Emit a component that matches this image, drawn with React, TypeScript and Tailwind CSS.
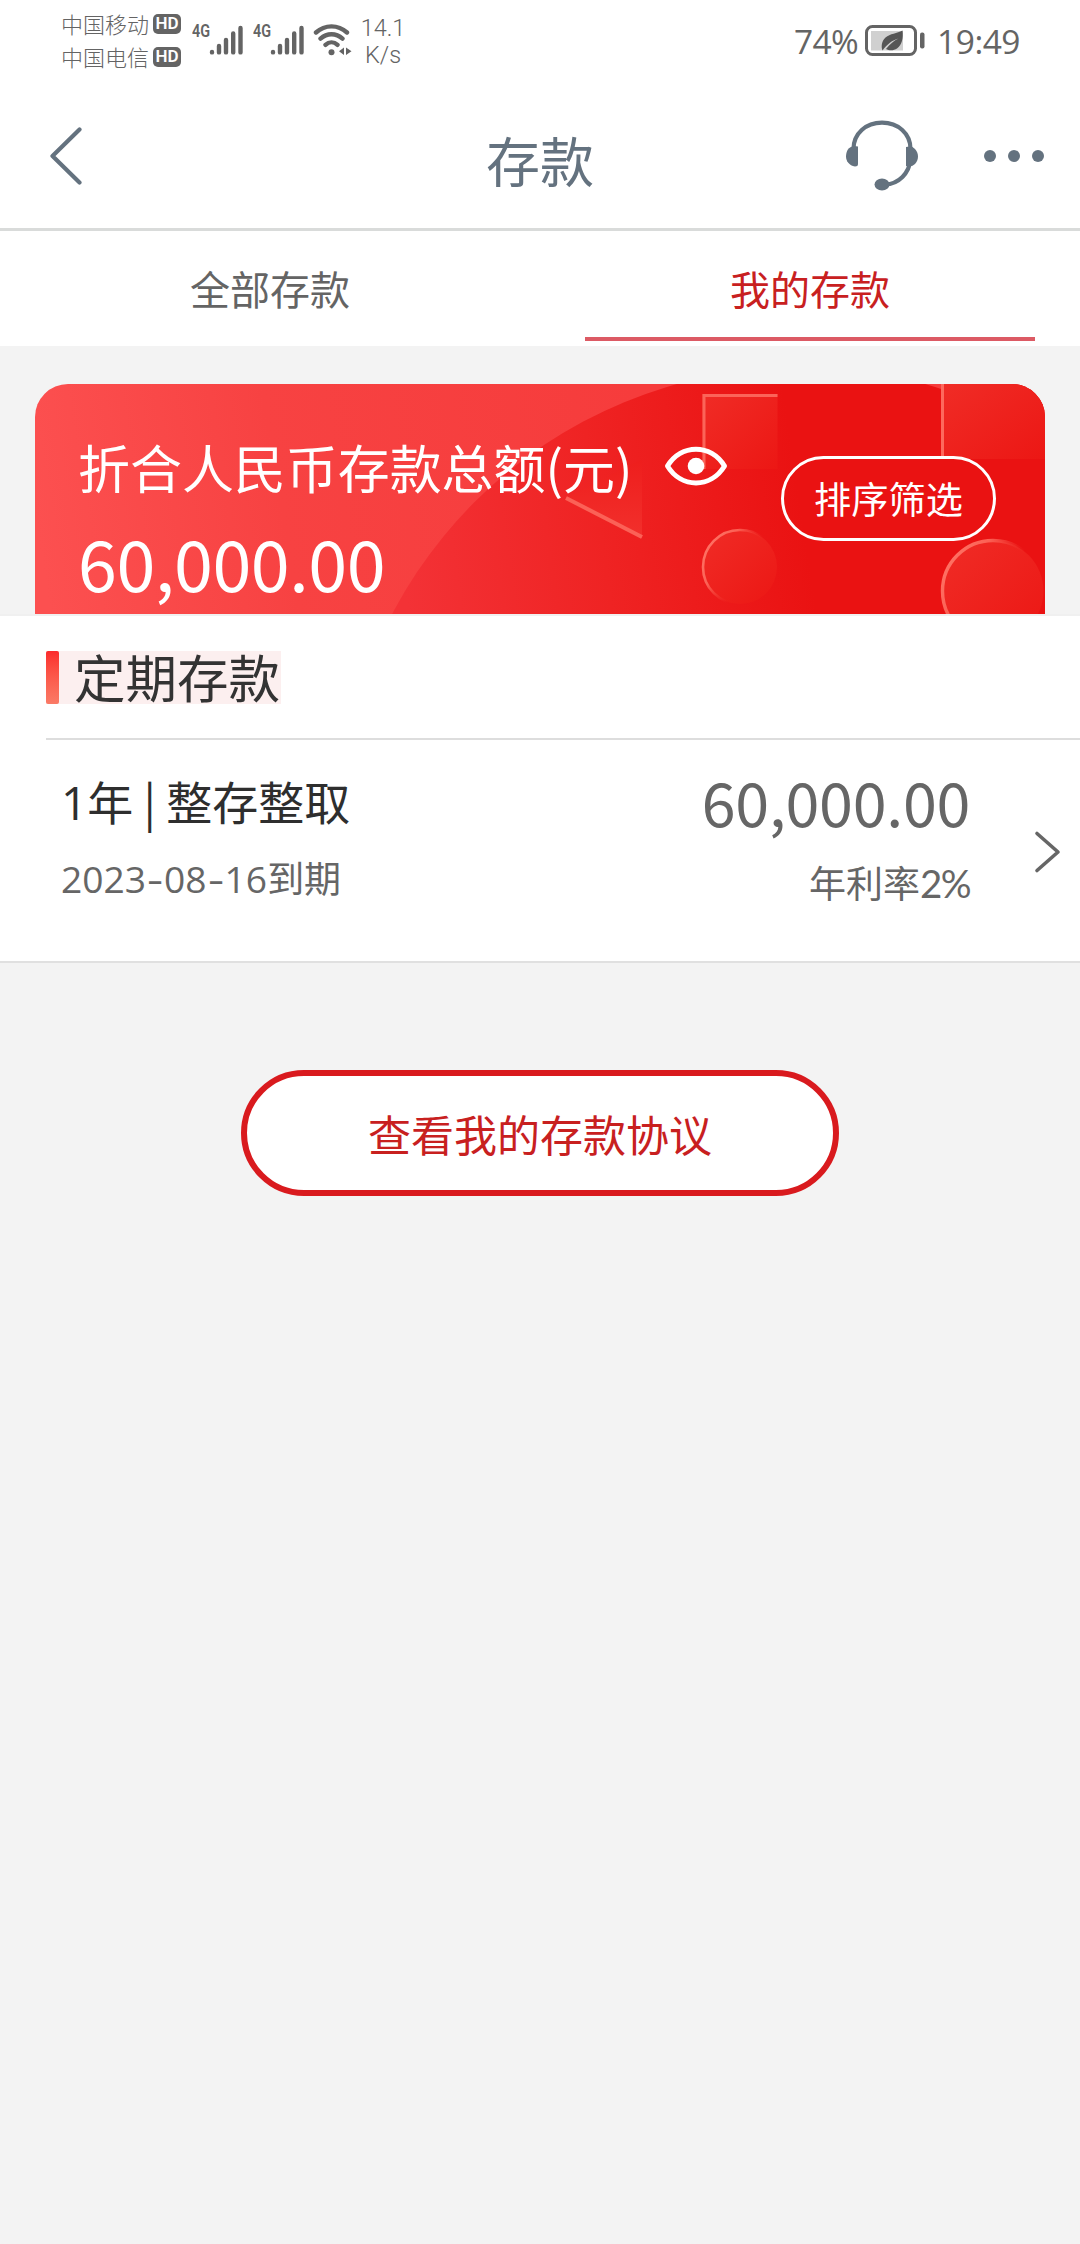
import React from "react";

const cjk = "font-['Noto_Sans_CJK_SC',sans-serif]";

function Signal() {
  return (
    <div className="relative h-8 w-[51px]">
      <span className="absolute left-[-1px] top-[-1px] origin-left scale-x-[0.78] font-['Roboto',sans-serif] text-[18.5px] font-semibold leading-[17px]">
        4G
      </span>
      <svg className="absolute left-[16px] top-0" width="35" height="32" viewBox="0 0 35 32" stroke="#646464" strokeWidth="4.4" strokeLinecap="round">
        <path d="M3 28V28.4M10 22V28.4M17 16V28.4M24.2 9.5V28.4M31.5 4V28.4" />
      </svg>
    </div>
  );
}

function Carrier({ name }: { name: string }) {
  return (
    <div className="flex h-[33px] items-center gap-[4px]">
      <span className="text-[22px] font-light leading-[33px]">{name}</span>
      <span className="flex h-5 w-7 items-center justify-center rounded-[5px] bg-[#646464] font-['Roboto',sans-serif] text-[17px] font-semibold leading-none text-white">
        HD
      </span>
    </div>
  );
}

function StatusBar() {
  return (
    <div className="flex h-20 items-start justify-between bg-white pl-[61px] pr-[60px] text-[#646464]">
      <div className="flex">
        <div className="mt-[7px] w-[122px]">
          <Carrier name="中国移动" />
          <Carrier name="中国电信" />
        </div>
        <div className="ml-[10px] mt-[24px] flex gap-[10px]">
          <Signal />
          <Signal />
        </div>
        <svg className="ml-[8px] mt-[22px]" width="40" height="36" viewBox="0 0 40 36" fill="none" stroke="#646464" strokeWidth="4.4" strokeLinecap="round">
          <path d="M3 10.5C12 2.3 25 2.3 34 10.5M7.5 16.6C14 10.8 23 10.8 29.5 16.6M12.5 22.8C16 19.6 21 19.6 24.5 22.8" />
          <circle cx="18.5" cy="30.3" r="3" fill="#646464" stroke="none" />
          <path d="M31 25.5V33L26 29.2ZM33 25.5V33L38.5 29.2Z" fill="#646464" stroke="none" />
        </svg>
        <div className="ml-[7px] mt-[15px] w-[46px] text-center font-['Roboto',sans-serif] text-[23.5px] font-light leading-[27px]">
          <div>14.1</div>
          <div>K/s</div>
        </div>
      </div>
      <div className="mt-[24px] flex h-8 items-center font-['Open_Sans',sans-serif] text-[33.5px] leading-8">
        <span className="mt-[2px] tracking-[-0.6px]">74%</span>
        <svg className="ml-[6px]" width="62" height="32" viewBox="0 0 62 32" fill="none">
          <rect x="2.5" y="2.5" width="49" height="28" rx="6" stroke="#646464" strokeWidth="3" />
          <rect x="7" y="7" width="32" height="19.5" fill="#d0d0d0" />
          <path d="M38.5 6.5C39.5 14 38 21 33 24.5C30 26.5 25.5 27 22 25C26 20 30 16.5 34.5 14.5C28.5 16 23 20.5 18.5 26.5C17 23 17.5 17 21.5 13.5C26 9.5 33 9.5 38.5 6.5Z" fill="#555" />
          <rect x="56" y="8.5" width="4.5" height="16" rx="2" fill="#646464" />
        </svg>
        <span className="ml-[11px] mt-[2px] tracking-[-0.5px]">19:49</span>
      </div>
    </div>
  );
}

function Header() {
  return (
    <header className="relative flex h-[151px] items-center justify-between border-b-[3px] border-[#d9dbda] bg-white pl-[46px] pr-[34px]">
      <svg width="36" height="60" viewBox="0 0 36 60" fill="none" stroke="#64727f" strokeWidth="4.2" strokeLinecap="round" strokeLinejoin="round" className="mt-[2px]">
        <path d="M33.5 4.5L6.5 31L33.5 57.5" />
      </svg>
      <h1 className="absolute inset-x-0 top-[40px] h-[80px] text-center text-[54px] leading-[80px] text-[#64727f]">存款</h1>
      <div className="relative flex items-center gap-[64px]">
        <svg width="76" height="76" viewBox="0 0 76 76" fill="#64727f" className="mt-[4px]">
          <path d="M9.5 31C9.5 15.5 22 4.7 38 4.7C54 4.7 66.5 15.5 66.5 31M66.5 42C65 55 55 66 41 66.5" fill="none" stroke="#64727f" strokeWidth="4.2" />
          <path d="M14 28.5V46Q14 48.5 11 48.5C5 47.5 2 43 2 38.5C2 33.5 4.5 28.5 10 28Z" />
          <path d="M62 29Q68 27.5 71 31C75 35 75 42 71 46Q68 49.5 62 48Z" />
          <ellipse cx="38" cy="66.5" rx="7.5" ry="6" />
        </svg>
        <svg className="mt-[4px]" width="62" height="12" viewBox="0 0 62 12" fill="#64727f">
          <circle cx="6" cy="6" r="6" />
          <circle cx="30" cy="6" r="6" />
          <circle cx="54" cy="6" r="6" />
        </svg>
      </div>
    </header>
  );
}

function Tabs() {
  return (
    <nav className="grid h-[115px] grid-cols-2 bg-white text-center text-[40px] leading-[115px]">
      <div className="text-[#646464]">全部存款</div>
      <div className="flex flex-col text-[#c8201f]">
        <span className="h-[106px]">我的存款</span>
        <span className="mx-[45px] h-[4px] bg-[#dc5a64]" />
      </div>
    </nav>
  );
}

function CardArt() {
  return (
    <svg className="absolute inset-0" width="1010" height="230" viewBox="35 384 1010 230" fill="none">
      <defs>
        <linearGradient id="base" gradientUnits="userSpaceOnUse" x1="35" y1="520" x2="640" y2="420">
          <stop offset="0" stopColor="#fc5050" />
          <stop offset="0.4" stopColor="#f74242" />
          <stop offset="1" stopColor="#f63c3c" />
        </linearGradient>
        <linearGradient id="disc" gradientUnits="userSpaceOnUse" x1="400" y1="560" x2="800" y2="500">
          <stop offset="0" stopColor="#f33236" />
          <stop offset="0.5" stopColor="#ef2323" />
          <stop offset="1" stopColor="#ea1212" />
        </linearGradient>
        <linearGradient id="facet" x1="0" y1="0" x2="1" y2="1">
          <stop offset="0" stopColor="#f02c26" />
          <stop offset="1" stopColor="#ec1714" />
        </linearGradient>
        <linearGradient id="tri" x1="0" y1="0" x2="0" y2="1">
          <stop offset="0" stopColor="#ee1e1d" />
          <stop offset="1" stopColor="#f2302c" />
        </linearGradient>
        <linearGradient id="rim" x1="0" y1="0.2" x2="0.9" y2="0.7">
          <stop offset="0" stopColor="#ff7466" />
          <stop offset="0.3" stopColor="#fb6155" />
          <stop offset="0.65" stopColor="#f0302a" stopOpacity="0" />
        </linearGradient>
      </defs>
      <rect x="35" y="384" width="1010" height="230" fill="url(#base)" />
      <circle cx="801" cy="829" r="462" fill="url(#disc)" />
      <path d="M1045 384H945V614H1045Z" fill="#ea1212" />
      <rect x="702" y="394" width="75.5" height="75" fill="url(#facet)" />
      <path d="M704 469V395.5H777.5" stroke="#fb6459" strokeWidth="3" />
      <rect x="941" y="384" width="104" height="75" fill="url(#facet)" />
      <path d="M942.5 384V459" stroke="#fd695d" strokeWidth="3" />
      <path d="M566 498L642 459V538Z" fill="url(#tri)" />
      <path d="M566 498L642 537" stroke="#fb6157" strokeWidth="4" />
      <circle cx="740" cy="567" r="37" fill="url(#facet)" stroke="url(#rim)" strokeWidth="2.6" />
      <circle cx="993" cy="591" r="50.5" fill="url(#facet)" stroke="url(#rim)" strokeWidth="3.4" />
    </svg>
  );
}

function SummaryCard() {
  return (
    <section className="relative mx-[35px] mt-[38px] flex h-[230px] overflow-hidden rounded-t-[33px] text-white">
      <CardArt />
      <div className="relative ml-[43px] mt-[45px] w-[575px]">
        <div className="whitespace-nowrap text-[51.95px] leading-[76px]">折合人民币存款总额(元)</div>
        <div className="mt-[12px] text-[70px] leading-[90px] tracking-[-0.4px]">60,000.00</div>
      </div>
      <svg className="relative ml-[10px] mt-[61px]" width="66" height="42" viewBox="0 0 66 42" fill="none">
        <path d="M4.5 21C18 -1.5 48 -1.5 61.5 21C48 43.5 18 43.5 4.5 21Z" stroke="#fff" strokeWidth="5" strokeLinejoin="round" />
        <circle cx="33" cy="21" r="8.3" fill="#fff" />
      </svg>
      <button className="relative ml-[52px] mt-[72px] h-[85px] w-[215px] rounded-full border-[3px] border-white text-[37.2px] leading-[79px]">
        排序筛选
      </button>
    </section>
  );
}

function DepositList() {
  return (
    <section className="h-[349px] border-y-2 border-[#e0e0e0] border-t-[#f0f0f0] bg-white">
      <div className="ml-[46px] h-[124px] border-b-2 border-[#dddddd] pt-[35px]">
        <div className="flex h-[53px] w-[235px] items-center bg-[#fcefef]">
          <span className="h-full w-[13px] rounded-[2px] bg-gradient-to-b from-[#fb2a2c] to-[#fa7a66]" />
          <h2 className="ml-[15px] mt-[-3px] whitespace-nowrap text-[51.5px] leading-[50px] text-[#333]">定期存款</h2>
        </div>
      </div>
      <div className="flex pl-[61px] pr-[19px]">
        <div className="flex-1 pt-[28px]">
          <div className="text-[46px] leading-[64px] text-[#2e2e2e]">
            <span className="font-['Open_Sans',sans-serif]">1</span>年 | 整存整取
          </div>
          <div className="mt-[12px] text-[37px] leading-[62px] text-[#666]">
            <span className="font-['Open_Sans',sans-serif] text-[37.2px]">
              2023<span className="inline-block w-[18px] origin-center scale-x-[1.35] text-center">-</span>08
              <span className="inline-block w-[18px] origin-center scale-x-[1.35] text-center">-</span>16
            </span>
            到期
          </div>
        </div>
        <div className="pt-[17px] text-right text-[#666]">
          <div className="text-[61px] leading-[88px] tracking-[-0.3px]">60,000.00</div>
          <div className="mt-[4px] text-[37px] leading-[66px]">
            年利率<span className="font-['Lato',sans-serif] text-[38.5px] tracking-[-1.6px]">2%</span>
          </div>
        </div>
        <svg className="ml-[63px] mt-[89px]" width="28" height="46" viewBox="0 0 28 46" fill="none" stroke="#666" strokeWidth="3.6" strokeLinecap="round" strokeLinejoin="round">
          <path d="M4 4.5L25 23L4 41.5" />
        </svg>
      </div>
    </section>
  );
}

export default function App() {
  return (
    <div className={`${cjk} flex h-[2244px] w-[1080px] flex-col overflow-hidden bg-[#f3f3f3]`}>
      <StatusBar />
      <Header />
      <Tabs />
      <SummaryCard />
      <DepositList />
      <button className="mx-auto mt-[107px] h-[126px] w-[598px] rounded-full border-[6px] border-[#d91a1e] bg-white text-[43px] leading-[113px] text-[#c8201f]">
        查看我的存款协议
      </button>
    </div>
  );
}
